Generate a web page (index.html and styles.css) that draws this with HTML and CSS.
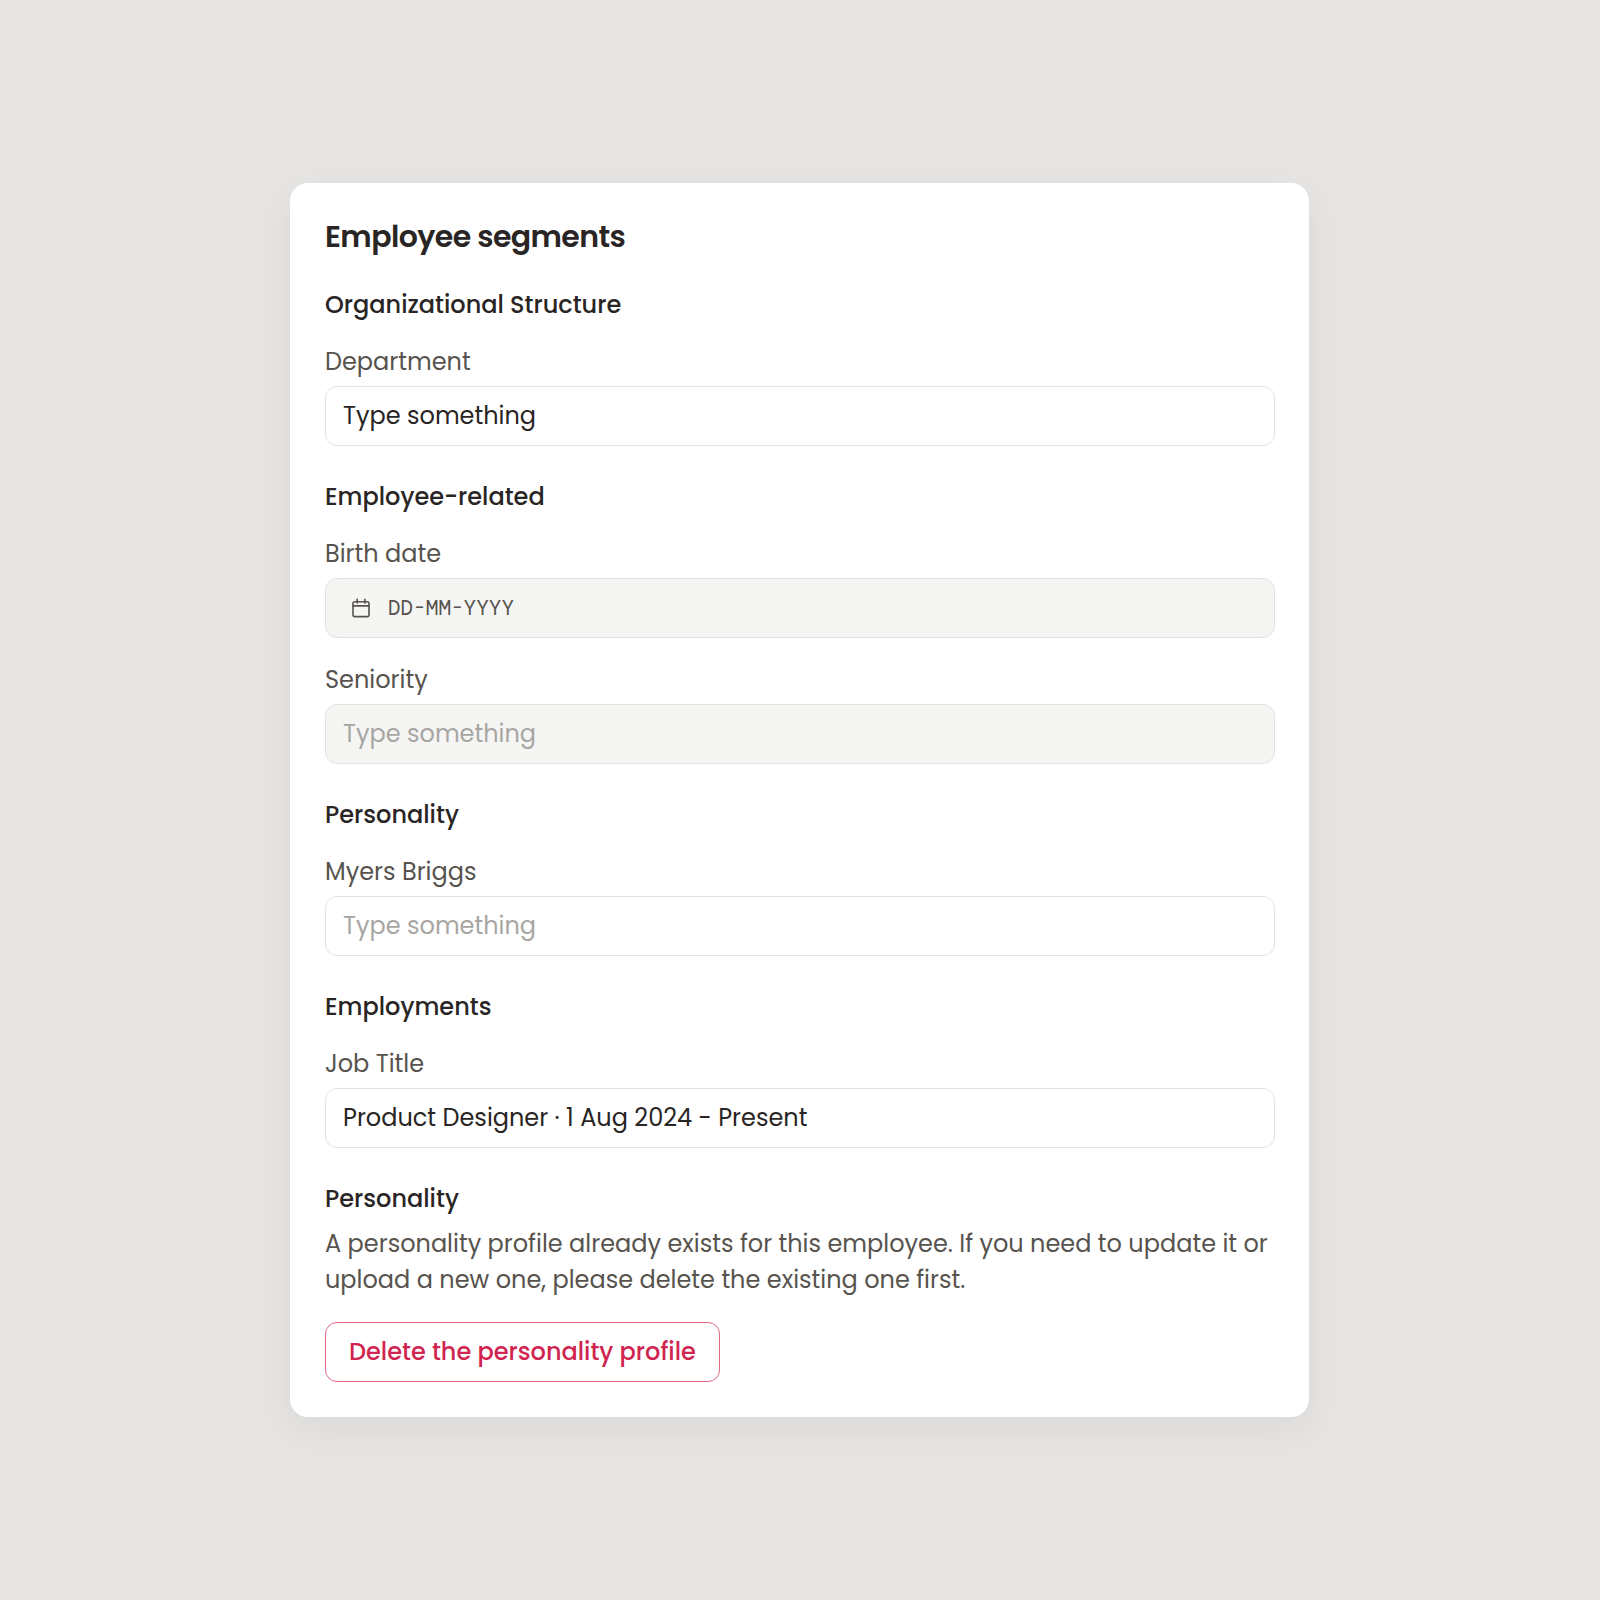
FILE: index.html
```html
<!DOCTYPE html>
<html lang="en">
<head>
    <meta charset="UTF-8">
    <meta name="viewport" content="width=device-width, initial-scale=1.0">
    <title>Employee segments</title>
    <link rel="stylesheet" href="styles.css">
</head>
<body>
    <form class="card" id="segments-form">
        <h1>Employee segments</h1>

        <h2>Organizational Structure</h2>
        <label for="department">Department</label>
        <input type="text" class="field" id="department" value="Type something">

        <h2>Employee-related</h2>
        <label>Birth date</label>
        <div class="field disabled date">
            <svg class="icon" viewBox="0 0 22 22" fill="none" stroke="currentColor" stroke-width="1.6" stroke-linecap="round" stroke-linejoin="round">
                <rect x="3" y="4.8" width="16" height="14.8" rx="1.8" />
                <path d="M7.2 2.2v3.9M14.9 2.2v3.9M3 8.9h16" />
            </svg>
            <span>DD-MM-YYYY</span>
        </div>
        <label class="next" for="seniority">Seniority</label>
        <input type="text" class="field disabled" id="seniority" placeholder="Type something" disabled>

        <h2>Personality</h2>
        <label for="myersBriggs">Myers Briggs</label>
        <input type="text" class="field" id="myersBriggs" placeholder="Type something">

        <h2>Employments</h2>
        <label for="jobTitle">Job Title</label>
        <input type="text" class="field" id="jobTitle" value="Product Designer · 1 Aug 2024 - Present">

        <h2>Personality</h2>
        <p class="note">A personality profile already exists for this employee. If you need to update it or upload a new one, please delete the existing one first.</p>
        <button type="button" class="delete">Delete the personality profile</button>
    </form>
</body>
</html>
```
FILE: styles.css
```css
/* General Styling */
* {
    box-sizing: border-box;
}

body {
    font-family: 'Poppins', 'Inter', sans-serif;
    font-size: 24px;
    line-height: 36px;
    margin: 0;
    padding: 183px 291px 0 290px;
    min-height: 1600px;
    background-color: #e6e5e3;
    color: #292524;
}

.card {
    height: 1234px;
    padding: 36px 34px 35px 35px;
    background: #fff;
    border-radius: 18px;
    box-shadow: 0 12px 36px rgba(40, 30, 50, 0.06);
}

h1 {
    margin: 0 0 32px;
    font-size: 30px;
    font-weight: 600;
    letter-spacing: -0.6px;
}

h2 {
    margin: 33px 0 22px;
    font-size: 24px;
    font-weight: 500;
    line-height: 35px;
}

h1 + h2 {
    margin-top: 0;
}

label {
    display: block;
    margin-bottom: 6px;
    color: #57534e;
}

.next {
    margin-top: 24px;
}

/* Fields */
.field {
    display: flex;
    align-items: center;
    width: 100%;
    height: 60px;
    padding: 0 17px 2px;
    background: #fff;
    border: 1px solid #e3e2e0;
    border-radius: 12px;
    color: inherit;
    font: inherit;
}

.field::placeholder {
    color: #a8a6a3;
}

.field.disabled {
    background: #f5f5f4;
}

.field.date {
    padding: 0 24px;
    gap: 16px;
    color: #57534e;
    font-family: 'DM Mono', 'Roboto Mono', monospace;
    font-size: 21px;
}

.icon {
    width: 22px;
    height: 22px;
}

.note {
    margin: -12px 0 24px;
    color: #57534e;
}

.delete {
    height: 60px;
    padding: 0 23px;
    background: #fff;
    border: 1px solid #df6a82;
    border-radius: 12px;
    color: #d02550;
    font: inherit;
    font-weight: 500;
}
```
